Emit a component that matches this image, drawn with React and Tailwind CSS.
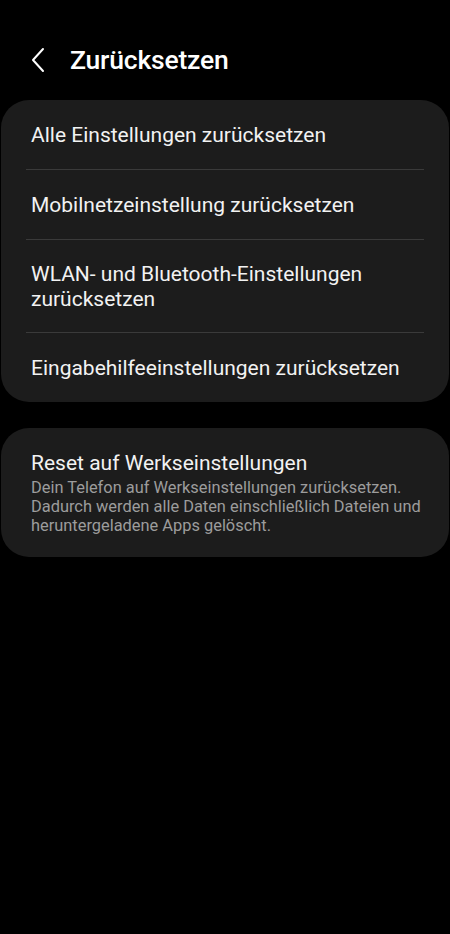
import React from "react";

const items = [
	"Alle Einstellungen zurücksetzen",
	"Mobilnetzeinstellung zurücksetzen",
	"WLAN- und Bluetooth-Einstellungen zurücksetzen",
	"Eingabehilfeeinstellungen zurücksetzen",
];

const App = () => {
	return (
		<div className="min-h-[934px] w-full bg-black text-white pt-[30px]" style={{ fontFamily: "Roboto, 'Noto Sans', sans-serif" }}>
			{/* header */}
			<div className="flex items-center h-[60px] pl-[28px]">
				<svg width="20" height="28" viewBox="0 0 20 28" fill="none" className="mr-[22px]">
					<path d="M15 3 L5 14 L15 25" stroke="white" strokeWidth="2" strokeLinecap="round" strokeLinejoin="round" />
				</svg>
				<h1 className="text-[26.5px] font-medium tracking-[-0.2px]">Zurücksetzen</h1>
			</div>

			{/* reset options */}
			<div className="mt-[10px] mx-[1px] rounded-[28px] bg-[#1c1c1c]">
				{items.map((label, i) => (
					<div key={label}>
						{i > 0 && <div className="mx-[25px] h-px bg-[#3a3a3a]"></div>}
						<div className={`flex items-center px-[30px] pt-[2px] ${i === 2 ? "min-h-[92px] pr-[60px]" : "min-h-[69px]"}`}>
							<span className="text-[21px] leading-[25px] text-[#f2f2f2]">{label}</span>
						</div>
					</div>
				))}
			</div>

			{/* factory reset */}
			<div className="mt-[26px] mx-[1px] rounded-[28px] bg-[#1c1c1c] pl-[30px] pr-[18px] pt-[22px] pb-[22px]">
				<div className="text-[21px] leading-[26px] text-[#f2f2f2]">Reset auf Werkseinstellungen</div>
				<p className="mt-[2px] text-[16.4px] leading-[19px] text-[#9c9c9c]">
					Dein Telefon auf Werkseinstellungen zurücksetzen. Dadurch werden alle Daten einschließlich Dateien und heruntergeladene Apps gelöscht.
				</p>
			</div>
		</div>
	);
};

export default App;
